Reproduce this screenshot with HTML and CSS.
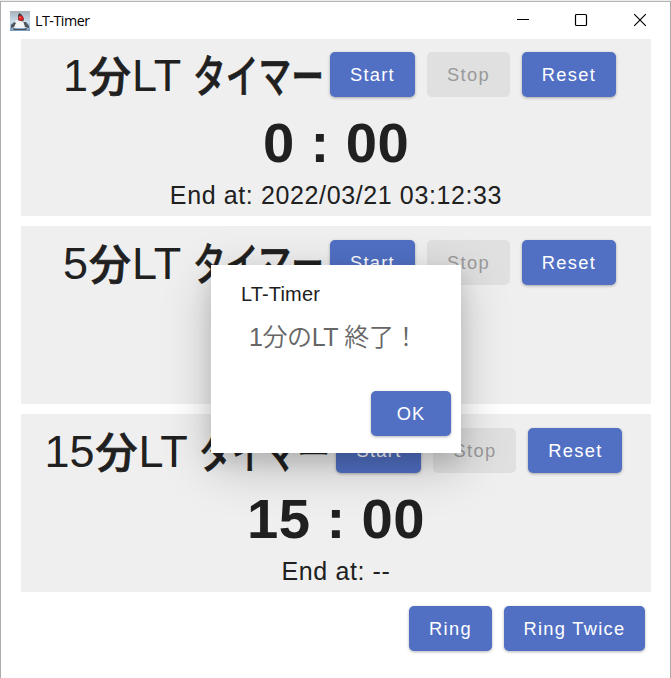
FILE: index.html
```
<!DOCTYPE html>
<html lang="ja">
<head>
<meta charset="utf-8">
<title>LT-Timer</title>
<link rel="stylesheet" href="styles.css">
</head>
<body>
<div class="window">
  <header class="titlebar">
    <svg class="app-icon" viewBox="0 0 20 20">
      <defs>
        <linearGradient id="sky" x1="0" y1="0" x2="0" y2="1"><stop offset="0" stop-color="#a9b2bc"/><stop offset=".55" stop-color="#c9dcec"/><stop offset="1" stop-color="#7599bd"/></linearGradient>
      </defs>
      <rect width="20" height="20" fill="url(#sky)"/>
      <path d="M2 12l5-3 7 1 4 4-2 3H4z" fill="#e6eaee"/>
      <path d="M8 9 8 4 9.500 2 12 4 14 8 13 11z" fill="#3c3e44"/>
      <path d="M1 14l3-3 2 1-2 4-3 1zM13 11l3 0 3 4v2l-4-1z" fill="#50555c"/>
      <path d="M3 17l3 1h8l3-1-1 2H4z" fill="#484e57"/>
      <path d="M7 10.500h6l1.500 4-2 2.500H7L5 15z" fill="#f3f4f5"/>
      <circle cx="10.800" cy="7.200" r="2.600" fill="#d92222"/>
      <circle cx="10" cy="6.500" r=".8" fill="#f58e80"/>
    </svg>
    <span class="app-name">LT-Timer</span>
    <svg class="controls" viewBox="0 0 132 16" fill="none" stroke="#000">
      <path d="M1 6.500h12" />
      <rect x="59.500" y="1.500" width="11" height="11" rx="1" stroke-width="1.200"/>
      <path d="M118.200 1.200l11.600 11.600M129.800 1.200l-11.600 11.600" stroke-width="1.200"/>
    </svg>
  </header>
  <main class="timers">
    <section class="timer">
      <div class="row">
        <h2 class="name">1<b class="min">分</b>LT <b class="kana">タイマー</b></h2>
        <button class="btn start">Start</button><button class="btn stop" disabled>Stop</button><button class="btn reset">Reset</button>
      </div>
      <div class="clock">0 : 00</div>
      <div class="end">End at: 2022/03/21 03:12:33</div>
    </section>
    <section class="timer lower">
      <div class="row">
        <h2 class="name">5<b class="min">分</b>LT <b class="kana">タイマー</b></h2>
        <button class="btn start">Start</button><button class="btn stop" disabled>Stop</button><button class="btn reset">Reset</button>
      </div>
    </section>
    <section class="timer lower">
      <div class="row wide">
        <h2 class="name">15<b class="min">分</b>LT <b class="kana">タイマー</b></h2>
        <button class="btn start">Start</button><button class="btn stop" disabled>Stop</button><button class="btn reset">Reset</button>
      </div>
      <div class="clock">15 : 00</div>
      <div class="end">End at: --</div>
    </section>
  </main>
  <footer class="actions"><button class="btn ring">Ring</button><button class="btn twice">Ring Twice</button></footer>
  <div class="dialog" role="dialog">
    <div class="dialog-title">LT-Timer</div>
    <div class="dialog-text">1<span class="cjk">分の</span>LT <span class="cjk">終了！</span></div>
    <button class="btn ok">OK</button>
  </div>
</div>
</body>
</html>
```
FILE: styles.css
```
* { box-sizing: border-box; }
body { margin: 0; overflow: hidden; background: #ececec; }
.window {
  position: relative;
  width: 671px;
  height: 677px;
  border: 1px solid #ababab;
  border-top-color: #b4b4b4;
  border-bottom: 0;
  background: #fff;
  color: #202020;
  font-family: "Liberation Sans", "Noto Sans CJK JP", sans-serif;
  margin-top: 1px;
}
.titlebar { display: flex; align-items: center; height: 37px; padding-left: 9px; }
.app-icon { width: 20px; height: 20px; }
.app-name { margin-left: 5px; font: 14.3px "Open Sans", sans-serif; letter-spacing: -.5px; color: #000; }
.controls { width: 132px; height: 16px; margin: 0 22px 0 auto; }
.timers { display: grid; gap: 10px; padding: 0 19px 0 20px; grid-template-rows: 177px 178px 178px; }
.timer { background: #efefef; padding-top: 13px; text-align: center; }
.timer.lower { padding-top: 14px; }
.row { display: flex; justify-content: center; height: 45px; padding-left: 7px; white-space: nowrap; }
.row.wide { padding-left: 0; padding-right: 5px; }
.name { margin: 0 5px 0 0; font-size: 45px; font-weight: 400; line-height: 47px; display: flex; white-space: pre; }
.name b { font-family: "Noto Sans CJK JP", sans-serif; font-weight: 500; -webkit-text-stroke: .7px #202020; line-height: 43px; }
.min { width: 44px; font-size: 42px; }
.kana { width: 132px; height: 47px; transform: scaleX(.728); transform-origin: left; }
.btn {
  height: 45px;
  padding: 0;
  border: 0;
  border-radius: 5px;
  background: #5170c4;
  color: #fff;
  font: 18.300px "Liberation Sans", sans-serif;
  letter-spacing: 1.300px;
  text-align: center;
  box-shadow: 0 1px 3px rgba(0, 0, 0, .3);
  flex: none;
}
.btn:disabled { background: #e0e0e0; color: #999; box-shadow: none; }
.start { width: 85px; }
.stop { width: 83px; margin: 0 12px; }
.reset { width: 94px; }
.clock { margin-top: 14px; font-size: 56.250px; font-weight: 700; line-height: 64px; letter-spacing: .4px; }
.end { margin-top: 5px; font-size: 25px; line-height: 30px; letter-spacing: .62px; }
.actions { display: flex; justify-content: flex-end; gap: 12px; padding: 14px 25px 0 0; }
.ring { width: 83px; }
.twice { width: 141px; }
.dialog {
  position: absolute;
  left: 210px;
  top: 263px;
  width: 250px;
  height: 188px;
  background: #fff;
  box-shadow: 0 14px 46px rgba(0, 0, 0, .22), 0 8px 18px rgba(0, 0, 0, .1);
  padding: 16px 10px 17px 30px;
  display: flex;
  flex-direction: column;
}
.dialog-title { font-size: 20px; line-height: 26px; letter-spacing: .15px; }
.dialog-text { padding-left: 8px; margin-top: 14px; font-size: 25px; line-height: 32px; color: #666; display: flex; white-space: pre; letter-spacing: -.4px; }
.cjk { font-family: "Noto Sans CJK JP", sans-serif; font-weight: 350; line-height: 28px; }
.ok { width: 80px; margin: auto 0 0 auto; letter-spacing: 1px; }
```
